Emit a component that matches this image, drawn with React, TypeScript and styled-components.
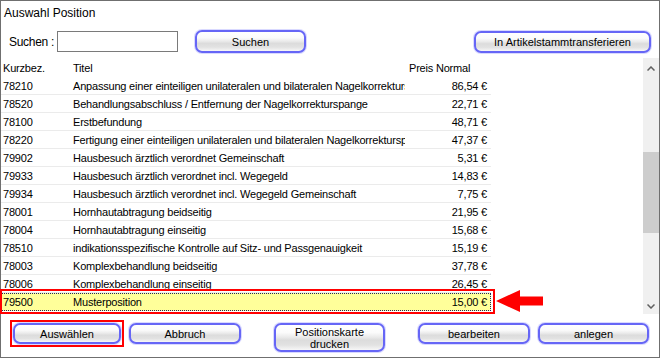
import React from 'react';
import styled, { createGlobalStyle, css } from 'styled-components';

const GlobalStyle = createGlobalStyle`
  html, body {
    margin: 0;
    padding: 0;
    background: #fff;
  }
  body {
    font-family: 'Liberation Sans', Arial, sans-serif;
    color: #000;
  }
`;

const Window = styled.div`
  width: 660px;
  height: 358px;
  box-sizing: border-box;
  border: 1px solid #6f6f6f;
  background: #fff;
  display: flex;
  flex-direction: column;
`;

const Title = styled.div`
  height: 24px;
  line-height: 24px;
  padding-left: 3px;
  font-size: 12px;
`;

const SearchRow = styled.div`
  height: 33px;
  display: flex;
  align-items: center;
  padding: 0 8px;
`;

const Label = styled.span`
  width: 48px;
  font-size: 12px;
  letter-spacing: -0.3px;
`;

const SearchInput = styled.input`
  width: 121px;
  height: 21px;
  box-sizing: border-box;
  border: 1px solid #7a7a7a;
  margin: 0;
  padding: 0 3px;
  font: 12px 'Liberation Sans', Arial, sans-serif;
  outline: none;
`;

const Spacer = styled.div`
  flex: 1;
`;

const GlassButton = styled.button<{ $w: number; $h?: number; $ml?: number; $marked?: boolean }>`
  position: relative;
  width: ${(p) => p.$w}px;
  height: ${(p) => p.$h ?? 21}px;
  margin: 0 0 0 ${(p) => p.$ml ?? 0}px;
  padding: 0;
  box-sizing: border-box;
  border: 2px solid #6666f6;
  border-radius: 7px;
  box-shadow: 0 0 0 1px rgba(130, 130, 255, 0.3);
  background: linear-gradient(
    to bottom,
    #ffffff 0%,
    #fbfbfb 30%,
    #ebebeb 48%,
    #dcdcdc 60%,
    #e2e2e2 80%,
    #f7f7f7 100%
  );
  font: 11px 'Liberation Sans', Arial, sans-serif;
  line-height: 12px;
  color: #000;
  flex-shrink: 0;
  ${(p) =>
    p.$marked &&
    css`
      &::after {
        content: '';
        position: absolute;
        top: -5px;
        left: -5px;
        right: -5px;
        bottom: -5px;
        border: 2px solid #f00;
      }
    `}
`;

const Grid = styled.div`
  height: 256px;
  display: flex;
`;

const TableArea = styled.div`
  flex: 1;
  display: flex;
  flex-direction: column;
  font-size: 11px;
  letter-spacing: -0.2px;
`;

const HeaderRow = styled.div`
  display: flex;
  height: 19px;
  box-sizing: border-box;
  padding-top: 2px;
  line-height: 17px;
`;

const DataRow = styled.div<{ $selected?: boolean }>`
  position: relative;
  display: flex;
  width: 490px;
  height: 18px;
  line-height: 19px;
  box-shadow: inset 0 -1px 0 #ebebeb;

  ${(p) =>
    p.$selected &&
    css`
      background: #ffff9a;
      box-shadow: none;

      &::before {
        content: '';
        position: absolute;
        inset: 0;
        border: 1px dotted #26265e;
      }

      &::after {
        content: '';
        position: absolute;
        top: -4px;
        left: -1px;
        right: -4px;
        bottom: -3px;
        border: 2px solid #f00;
      }
    `}
`;

const Cell = styled.div<{ $w: number; $right?: boolean; $pl?: number }>`
  width: ${(p) => p.$w}px;
  box-sizing: border-box;
  padding: 0 4px 0 ${(p) => p.$pl ?? 3}px;
  white-space: nowrap;
  overflow: hidden;
  text-align: ${(p) => (p.$right ? 'right' : 'left')};
  flex-shrink: 0;
`;

const Arrow = styled.svg`
  position: absolute;
  left: 495px;
  top: -3px;
  z-index: 2;
`;

const ScrollBar = styled.div`
  width: 16px;
  background: #f0f0f0;
  display: flex;
  flex-direction: column;
`;

const ScrollArrow = styled.div<{ $h: number }>`
  height: ${(p) => p.$h}px;
  display: flex;
  align-items: center;
  justify-content: center;
`;

const Track = styled.div`
  flex: 1;
`;

const Thumb = styled.div`
  background: #cdcdcd;
`;

const BottomRow = styled.div`
  display: flex;
  align-items: flex-start;
  padding: 9px 0 0 12px;
`;

const rows = [
  ['78210', 'Anpassung einer einteiligen unilateralen und bilateralen Nagelkorrekturspange', '86,54 €'],
  ['78520', 'Behandlungsabschluss / Entfernung der Nagelkorrekturspange', '22,71 €'],
  ['78100', 'Erstbefundung', '48,71 €'],
  ['78220', 'Fertigung einer einteiligen unilateralen und bilateralen Nagelkorrekturspange', '47,37 €'],
  ['79902', 'Hausbesuch ärztlich verordnet Gemeinschaft', '5,31 €'],
  ['79933', 'Hausbesuch ärztlich verordnet incl. Wegegeld', '14,83 €'],
  ['79934', 'Hausbesuch ärztlich verordnet incl. Wegegeld Gemeinschaft', '7,75 €'],
  ['78001', 'Hornhautabtragung beidseitig', '21,95 €'],
  ['78004', 'Hornhautabtragung einseitig', '15,68 €'],
  ['78510', 'indikationsspezifische Kontrolle auf Sitz- und Passgenauigkeit', '15,19 €'],
  ['78003', 'Komplexbehandlung beidseitig', '37,78 €'],
  ['78006', 'Komplexbehandlung einseitig', '26,45 €'],
  ['79500', 'Musterposition', '15,00 €'],
];

const selectedCode = '79500';

const App = () => {
  const thumbTop = 74;
  const thumbHeight = 81;

  return (
    <>
      <GlobalStyle />
      <Window>
        <Title>Auswahl Position</Title>
        <SearchRow>
          <Label>Suchen :</Label>
          <SearchInput />
          <GlassButton $w={111} $h={23} $ml={17}>
            Suchen
          </GlassButton>
          <Spacer />
          <GlassButton $w={177} $h={22}>
            In Artikelstammtransferieren
          </GlassButton>
        </SearchRow>
        <Grid>
          <TableArea>
            <HeaderRow>
              <Cell $w={69} $pl={2}>Kurzbez.</Cell>
              <Cell $w={335}>Titel</Cell>
              <Cell $w={86} $pl={4}>Preis Normal</Cell>
            </HeaderRow>
            {rows.map(([code, title, price]) => (
              <DataRow key={code} $selected={code === selectedCode}>
                <Cell $w={69} $pl={2}>{code}</Cell>
                <Cell $w={335}>{title}</Cell>
                <Cell $w={86} $right>{price}</Cell>
                {code === selectedCode && (
                  <Arrow width="48" height="22" viewBox="0 0 48 22">
                    <polygon points="0,11 24,0 24,6.5 47,6.5 47,15.5 24,15.5 24,22" fill="#f00" />
                  </Arrow>
                )}
              </DataRow>
            ))}
          </TableArea>
          <ScrollBar>
            <ScrollArrow $h={20}>
              <svg width="8" height="5" viewBox="0 0 8 5">
                <polyline points="0.5,4.5 4,1 7.5,4.5" fill="none" stroke="#606060" strokeWidth="1.5" />
              </svg>
            </ScrollArrow>
            <Track>
              <Thumb style={{ marginTop: thumbTop, height: thumbHeight }} />
            </Track>
            <ScrollArrow $h={16}>
              <svg width="8" height="5" viewBox="0 0 8 5">
                <polyline points="0.5,0.5 4,4 7.5,0.5" fill="none" stroke="#606060" strokeWidth="1.5" />
              </svg>
            </ScrollArrow>
          </ScrollBar>
        </Grid>
        <BottomRow>
          <GlassButton $w={108} $marked>
            Auswählen
          </GlassButton>
          <GlassButton $w={112} $ml={8}>
            Abbruch
          </GlassButton>
          <GlassButton $w={111} $h={29} $ml={33}>
            Positionskarte
            <br />
            drucken
          </GlassButton>
          <GlassButton $w={112} $ml={33}>
            bearbeiten
          </GlassButton>
          <GlassButton $w={111} $ml={8}>
            anlegen
          </GlassButton>
        </BottomRow>
      </Window>
    </>
  );
};

export default App;
